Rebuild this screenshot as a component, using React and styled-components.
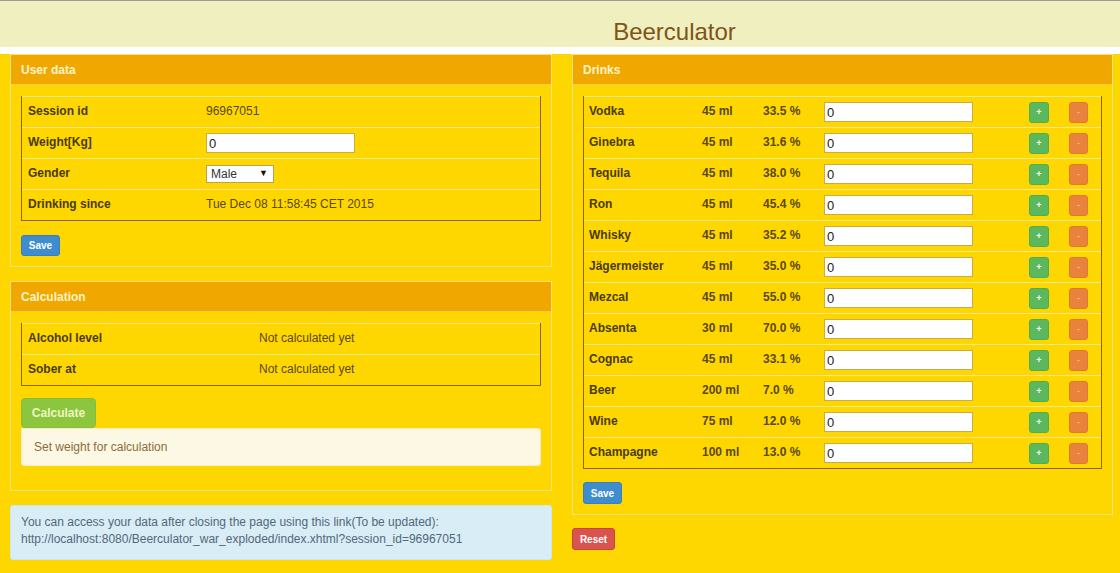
import React from "react";
import styled, { createGlobalStyle } from "styled-components";

const Global = createGlobalStyle`
  html, body { margin: 0; padding: 0; }
  body {
    background: #ffd700;
    font-family: "Liberation Sans", Arial, sans-serif;
    font-size: 12px;
    color: #4d3d0a;
  }
  * { box-sizing: border-box; }
`;

const Header = styled.header`
  border-top: 1px solid #9c9c94;
  background: #f0efc0;
  height: 54px;
  border-bottom: 7px solid #ffffff;
  display: flex;
  align-items: flex-end;
  justify-content: center;
  padding-left: 229px;
`;

const Title = styled.h1`
  margin: 0 0 2px 0;
  font-size: 24px;
  font-weight: normal;
  line-height: 27px;
  color: #7f5417;
`;

const Main = styled.main`
  display: grid;
  grid-template-columns: 542px 541px;
  column-gap: 20px;
  padding: 0 7px 0 10px;
`;

const Column = styled.div`
  display: flex;
  flex-direction: column;
  align-items: flex-start;
`;

const Panel = styled.section`
  width: 100%;
  border: 1px solid #f6e27a;
  margin-bottom: ${(p) => p.$mb || 0}px;
`;

const PanelHeading = styled.div`
  height: 30px;
  background: #f0a800;
  border-bottom: 1px solid #f7c94a;
  color: #fff4c8;
  font-weight: bold;
  font-size: 12px;
  display: flex;
  align-items: center;
  padding: 0 10px;
`;

const PanelBody = styled.div`
  padding: 11px 10px 10px 10px;
  display: flex;
  flex-direction: column;
  align-items: flex-start;
`;

const Table = styled.div`
  width: 100%;
  border-left: 1px solid #8a6412;
  border-right: 1px solid #8a6412;
  border-bottom: 1px solid #8a6412;
`;

const Row = styled.div`
  display: grid;
  grid-template-columns: ${(p) => p.$cols};
  align-items: center;
  height: 31px;
  border-top: 1px solid #f8e68a;
  padding-left: ${(p) => p.$pl || 6}px;
`;

const Label = styled.div`
  font-weight: bold;
  color: #4a3a08;
  margin-bottom: 3px;
`;

const Value = styled.div`
  color: #5a4812;
  font-weight: ${(p) => (p.$bold ? "bold" : "normal")};
  margin-bottom: 3px;
`;

const TextInput = styled.input`
  width: ${(p) => p.$w}px;
  height: 20px;
  border: 1px solid #c9ab4a;
  background: #fff;
  padding: 0 2px;
  font-family: "Liberation Sans", Arial, sans-serif;
  font-size: 13px;
  color: #222;
  outline: none;
  border-radius: 0;
`;

const SelectWrap = styled.div`
  position: relative;
  width: 68px;
  height: 18px;
`;

const Select = styled.select`
  appearance: none;
  width: 68px;
  height: 18px;
  border: 1px solid #b8a060;
  background: #fff;
  padding: 0 0 0 4px;
  font-family: "Liberation Sans", Arial, sans-serif;
  font-size: 12px;
  color: #333;
  border-radius: 0;
`;

const Arrow = styled.span`
  position: absolute;
  right: 6px;
  top: 3px;
  font-size: 9px;
  color: #111;
  pointer-events: none;
`;

const Btn = styled.button`
  font-family: "Liberation Sans", Arial, sans-serif;
  font-weight: bold;
  font-size: ${(p) => p.$fs || 10}px;
  color: ${(p) => p.$fg || "#fff"};
  background: ${(p) => p.$bg};
  border: 1px solid ${(p) => p.$bd};
  border-radius: ${(p) => p.$r ?? 3}px;
  width: ${(p) => p.$w}px;
  height: ${(p) => p.$h}px;
  margin-top: ${(p) => p.$mt || 0}px;
  padding: 0;
  display: inline-flex;
  align-items: center;
  justify-content: center;
  cursor: pointer;
`;

const Alert = styled.div`
  width: 100%;
  height: 38px;
  background: #fcf8e3;
  border: 1px solid #f8ecc0;
  border-radius: 0 3px 3px 3px;
  color: #8a6d3b;
  display: flex;
  align-items: center;
  padding: 0 12px;
  margin-bottom: 14px;
`;

const Info = styled.div`
  width: 100%;
  background: #d9edf7;
  border: 1px solid #cfe6ef;
  border-radius: 3px;
  color: #52687a;
  line-height: 17px;
  padding: 8px 10px 11px 10px;
`;

const drinks = [
  ["Vodka", "45 ml", "33.5 %"],
  ["Ginebra", "45 ml", "31.6 %"],
  ["Tequila", "45 ml", "38.0 %"],
  ["Ron", "45 ml", "45.4 %"],
  ["Whisky", "45 ml", "35.2 %"],
  ["Jägermeister", "45 ml", "35.0 %"],
  ["Mezcal", "45 ml", "55.0 %"],
  ["Absenta", "30 ml", "70.0 %"],
  ["Cognac", "45 ml", "33.1 %"],
  ["Beer", "200 ml", "7.0 %"],
  ["Wine", "75 ml", "12.0 %"],
  ["Champagne", "100 ml", "13.0 %"],
];

export default function App() {
  return (
    <>
      <Global />
      <Header>
        <Title>Beerculator</Title>
      </Header>
      <Main>
        <Column>
          <Panel $mb={14}>
            <PanelHeading>User data</PanelHeading>
            <PanelBody>
              <Table>
                <Row $cols="178px 1fr">
                  <Label>Session id</Label>
                  <Value>96967051</Value>
                </Row>
                <Row $cols="178px 1fr">
                  <Label>Weight[Kg]</Label>
                  <TextInput $w={149} defaultValue="0" />
                </Row>
                <Row $cols="178px 1fr">
                  <Label>Gender</Label>
                  <SelectWrap>
                    <Select defaultValue="Male">
                      <option>Male</option>
                      <option>Female</option>
                    </Select>
                    <Arrow>▼</Arrow>
                  </SelectWrap>
                </Row>
                <Row $cols="178px 1fr">
                  <Label>Drinking since</Label>
                  <Value>Tue Dec 08 11:58:45 CET 2015</Value>
                </Row>
              </Table>
              <Btn $bg="#3f8ccf" $bd="#3a7fbd" $w={39} $h={21} $mt={14}>
                Save
              </Btn>
            </PanelBody>
          </Panel>
          <Panel $mb={14}>
            <PanelHeading>Calculation</PanelHeading>
            <PanelBody>
              <Table>
                <Row $cols="231px 1fr">
                  <Label>Alcohol level</Label>
                  <Value>Not calculated yet</Value>
                </Row>
                <Row $cols="231px 1fr">
                  <Label>Sober at</Label>
                  <Value>Not calculated yet</Value>
                </Row>
              </Table>
              <Btn
                $bg="#8cc63e"
                $bd="#86bd3c"
                $fg="#eef6c4"
                $fs={12}
                $w={75}
                $h={30}
                $mt={12}
                $r={4}
              >
                Calculate
              </Btn>
              <Alert>Set weight for calculation</Alert>
            </PanelBody>
          </Panel>
          <Info>
            You can access your data after closing the page using this link(To be updated):
            <br />
            http://localhost:8080/Beerculator_war_exploded/index.xhtml?session_id=96967051
          </Info>
        </Column>
        <Column>
          <Panel>
            <PanelHeading>Drinks</PanelHeading>
            <PanelBody>
              <Table>
                {drinks.map(([name, vol, pct]) => (
                  <Row key={name} $cols="113px 61px 61px 205px 40px 1fr" $pl={5}>
                    <Label>{name}</Label>
                    <Value $bold>{vol}</Value>
                    <Value $bold>{pct}</Value>
                    <TextInput $w={149} defaultValue="0" />
                    <Btn $bg="#5cb85c" $bd="#52ad52" $w={20} $h={21} $fs={9}>
                      +
                    </Btn>
                    <Btn
                      $bg="#e9823a"
                      $bd="#e07a30"
                      $fg="#f6b98c"
                      $w={19}
                      $h={21}
                      $fs={9}
                    >
                      -
                    </Btn>
                  </Row>
                ))}
              </Table>
              <Btn $bg="#3f8ccf" $bd="#3a7fbd" $w={39} $h={22} $mt={13}>
                Save
              </Btn>
            </PanelBody>
          </Panel>
          <Btn $bg="#d9534f" $bd="#c9443f" $w={43} $h={22} $mt={13}>
            Reset
          </Btn>
        </Column>
      </Main>
    </>
  );
}
